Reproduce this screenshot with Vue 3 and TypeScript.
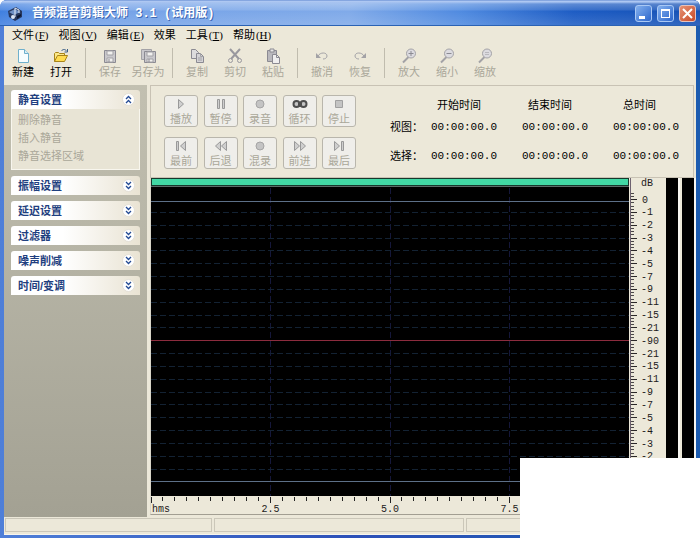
<script setup lang="ts">
interface Shape { d: string; fill?: string; stroke?: string; width?: number }
interface Item { label: string; icon: string; disabled?: boolean }

const GRAY = '#a3a2a6'
const DARK = '#8b8a92'

const icons: Record<string, Shape[]> = {
  file: [
    { d: 'M3.5 1.5h6l4 4v9h-10z', fill: '#f7fdff', stroke: '#6fb0cc' },
    { d: 'M9.5 1.5v4h4', fill: '#d8eef8', stroke: '#6fb0cc' },
  ],
  open: [
    { d: 'M1.5 13.5v-8l1-1h3l1 1h5v2', fill: '#fbe88a', stroke: '#a88418' },
    { d: 'M1.5 13.5l3-6h10l-3 6z', fill: '#ffdc50', stroke: '#a88418' },
    { d: 'M8.5 3c1-2 4-2 5 0M14.5 1v3h-3', stroke: '#3c5f86' },
  ],
  save: [
    { d: 'M2.5 2.5h11v12h-11z', fill: '#c9c8cc', stroke: DARK },
    { d: 'M5 3h6v4H5zM5 10h6v4H5z', fill: '#f1f0ee', stroke: GRAY },
    { d: 'M7 11v3', stroke: DARK },
  ],
  saveas: [
    { d: 'M1.5 1.5h10v10h-10z', fill: '#c9c8cc', stroke: GRAY },
    { d: 'M4.5 3.5h11v11h-11z', fill: '#c9c8cc', stroke: DARK },
    { d: 'M7 4h6v4H7zM7 11h6v3H7z', fill: '#f1f0ee', stroke: GRAY },
    { d: 'M9 11v3', stroke: DARK },
  ],
  copy: [
    { d: 'M2.5 1.5h4l3 3v6h-7z', fill: '#dddcdd', stroke: DARK },
    { d: 'M7.5 5.5h4l3 3v6h-7z', fill: '#d4d3d6', stroke: DARK },
    { d: 'M11.5 5.5v3h3M9 10h4M9 12h4', stroke: GRAY },
  ],
  cut: [
    { d: 'M3 1l9 10M13 1L4 11', stroke: '#99989e', width: 2 },
    { d: 'M1.5 12.5a2 2 0 1 0 4 0a2 2 0 1 0-4 0M10.5 12.5a2 2 0 1 0 4 0a2 2 0 1 0-4 0', stroke: '#99989e', width: 1 },
  ],
  paste: [
    { d: 'M2.5 2.5h9v11h-9z', fill: '#b9b8bd', stroke: DARK },
    { d: 'M5 1h4v3H5z', fill: '#e6e5e5', stroke: DARK },
    { d: 'M7.5 6.5h4l3 3v6h-7z', fill: '#efeeee', stroke: DARK },
    { d: 'M11.5 6.5v3h3', stroke: DARK },
  ],
  undo: [
    { d: 'M4 8c2-4 9-4 9 0c0 2-2 3-4 3', stroke: GRAY, width: 1 },
    { d: 'M2 5v5h5z', fill: GRAY },
  ],
  redo: [
    { d: 'M12 8c-2-4-9-4-9 0c0 2 2 3 4 3', stroke: GRAY, width: 1 },
    { d: 'M14 5v5H9z', fill: GRAY },
  ],
  zoomin: [
    { d: 'M7.5 9L2 14.5', stroke: GRAY, width: 2 },
    { d: 'M5.5 5.5a4.5 4.5 0 1 0 9 0a4.5 4.5 0 1 0-9 0', fill: '#dcdbe0', stroke: GRAY },
    { d: 'M7.5 5.5h5M10 3v5', stroke: DARK },
  ],
  zoomout: [
    { d: 'M7.5 9L2 14.5', stroke: GRAY, width: 2 },
    { d: 'M5.5 5.5a4.5 4.5 0 1 0 9 0a4.5 4.5 0 1 0-9 0', fill: '#dcdbe0', stroke: GRAY },
    { d: 'M7.5 5.5h5', stroke: DARK },
  ],
  zoom: [
    { d: 'M7.5 9L2 14.5', stroke: GRAY, width: 2 },
    { d: 'M5.5 5.5a4.5 4.5 0 1 0 9 0a4.5 4.5 0 1 0-9 0', fill: '#dcdbe0', stroke: GRAY },
    { d: 'M8 4.5h4M8 6.5h4', stroke: '#b9b8bd' },
  ],
  play: [{ d: 'M5.5 3.5l5 4.5l-5 4.5z', fill: '#cfcfcf', stroke: '#999' }],
  pause: [{ d: 'M4.5 3.5h2v9h-2zM9.5 3.5h2v9h-2z', fill: '#cfcfcf', stroke: '#999' }],
  record: [{ d: 'M4 8a4 4 0 1 0 8 0a4 4 0 1 0-8 0', fill: '#c4c4c4', stroke: '#a5a5a5' }],
  loop: [{ d: 'M1.5 8a3 3 0 1 0 6 0a3 3 0 1 0-6 0M8.5 8a3 3 0 1 0 6 0a3 3 0 1 0-6 0M6 8h4', fill: '#c4c4c4', stroke: '#4e4e4e', width: 2 }],
  stop: [{ d: 'M4.5 4.5h7v7h-7z', fill: '#c4c4c4', stroke: '#a0a0a0' }],
  first: [{ d: 'M3.5 3.5h2v9h-2zM12.5 3.5v9l-5-4.5z', fill: '#cfcfcf', stroke: '#999' }],
  rewind: [{ d: 'M7.5 3.5v9l-5-4.5zM13.5 3.5v9l-5-4.5z', fill: '#cfcfcf', stroke: '#999' }],
  forward: [{ d: 'M2.5 3.5v9l5-4.5zM8.5 3.5v9l5-4.5z', fill: '#cfcfcf', stroke: '#999' }],
  last: [{ d: 'M3.5 3.5v9l5-4.5zM10.5 3.5h2v9h-2z', fill: '#cfcfcf', stroke: '#999' }],
}

const menus = [
  { text: '文件', key: 'F' },
  { text: '视图', key: 'V' },
  { text: '编辑', key: 'E' },
  { text: '效果', key: '' },
  { text: '工具', key: 'T' },
  { text: '帮助', key: 'H' },
]

const toolGroups: Item[][] = [
  [{ label: '新建', icon: 'file' }, { label: '打开', icon: 'open' }],
  [{ label: '保存', icon: 'save', disabled: true }, { label: '另存为', icon: 'saveas', disabled: true }],
  [
    { label: '复制', icon: 'copy', disabled: true },
    { label: '剪切', icon: 'cut', disabled: true },
    { label: '粘贴', icon: 'paste', disabled: true },
  ],
  [{ label: '撤消', icon: 'undo', disabled: true }, { label: '恢复', icon: 'redo', disabled: true }],
  [
    { label: '放大', icon: 'zoomin', disabled: true },
    { label: '缩小', icon: 'zoomout', disabled: true },
    { label: '缩放', icon: 'zoom', disabled: true },
  ],
]

const transport: Item[] = [
  { label: '播放', icon: 'play' },
  { label: '暂停', icon: 'pause' },
  { label: '录音', icon: 'record' },
  { label: '循环', icon: 'loop' },
  { label: '停止', icon: 'stop' },
  { label: '最前', icon: 'first' },
  { label: '后退', icon: 'rewind' },
  { label: '混录', icon: 'record' },
  { label: '前进', icon: 'forward' },
  { label: '最后', icon: 'last' },
]

const panels = [
  { title: '静音设置', items: ['删除静音', '插入静音', '静音选择区域'] },
  { title: '振幅设置', items: [] },
  { title: '延迟设置', items: [] },
  { title: '过滤器', items: [] },
  { title: '噪声削减', items: [] },
  { title: '时间/变调', items: [] },
]

const zeroTime = '00:00:00.0'

// Decibel levels run outwards from the silent centre line in both directions.
const levels = ['0', '-1', '-2', '-3', '-4', '-5', '-7', '-9', '-11', '-15', '-21']
const TOP = 6.8
const BOTTOM = 95.6
const STEP = (BOTTOM - TOP) / 22
const marks = [...levels, '-90', ...[...levels].reverse()].map((text, i) => ({
  text,
  y: TOP + i * STEP,
}))
const gridLines = marks.slice(1, -1).filter((m) => m.text !== '-90')
const centerLine = TOP + 11 * STEP
const clipLines = [7.4, 95.4]
const minorLevels = Array.from({ length: 93 }, (_, i) => TOP + (i - 2) * (STEP / 4))
const pct = (n: number): string => `${n.toFixed(3)}%`

const seconds = [2.5, 5, 7.5]
const timeTicks = Array.from({ length: 41 }, (_, i) => i * 2.5)
</script>

<template>
  <div class="window">
    <header class="titlebar">
      <svg class="app-icon" width="16" height="16" viewBox="0 0 16 16" aria-hidden="true">
        <path d="M1 5l8-4l6 4v6l-7 4l-6-4z" fill="#26375e" />
        <path d="M2 6l6-3l5 3l-6 3z" fill="#6e8fc4" />
        <path d="M8 2v9M8 2l4 2v3" fill="none" stroke="#e5edfa" />
        <circle cx="6" cy="11" r="2" fill="#dce6f6" />
        <path d="M10 10l4-2v2l-4 3z" fill="#0c1630" />
      </svg>
      <h1>音频混音剪辑大师 3.1 (试用版)</h1>
      <div class="caption-buttons">
        <button type="button" aria-label="最小化"><svg width="15" height="15" viewBox="0 0 15 15"><path d="M3 10h6v3H3z" fill="#fff" /></svg></button>
        <button type="button" aria-label="最大化"><svg width="15" height="15" viewBox="0 0 15 15"><path d="M3 3h9v9H3zM4 5v6h7V5z" fill="#fff" fill-rule="evenodd" /></svg></button>
        <button type="button" class="close" aria-label="关闭"><svg width="15" height="15" viewBox="0 0 15 15"><path d="M3 3l9 9M12 3l-9 9" stroke="#fff" stroke-width="2" /></svg></button>
      </div>
    </header>

    <div class="client">
      <nav class="menubar">
        <button v-for="m in menus" :key="m.text" type="button">{{ m.text }}<span v-if="m.key" class="key">(<u>{{ m.key }}</u>)</span></button>
      </nav>

      <div class="toolbar">
        <div v-for="(group, gi) in toolGroups" :key="gi" class="group">
          <button v-for="t in group" :key="t.label" type="button" :disabled="t.disabled">
            <svg width="16" height="16" viewBox="0 0 16 16" aria-hidden="true">
              <path v-for="(s, i) in icons[t.icon]" :key="i" :d="s.d" :fill="s.fill ?? 'none'" :stroke="s.stroke ?? 'none'" :stroke-width="s.width ?? 1" />
            </svg>
            <span>{{ t.label }}</span>
          </button>
        </div>
      </div>

      <div class="body">
        <aside class="side">
          <section v-for="p in panels" :key="p.title" class="panel">
            <button type="button" class="panel-head" :aria-expanded="p.items.length > 0">
              <span>{{ p.title }}</span>
              <svg width="13" height="13" viewBox="0 0 13 13" aria-hidden="true">
                <circle cx="6.5" cy="6.5" r="6" fill="#fff" stroke="#e3dfd6" />
                <path v-if="p.items.length" d="M4 6l2.5-2.5L9 6M4 10l2.5-2.5L9 10" fill="none" stroke="#234a94" stroke-width="1.3" />
                <path v-else d="M4 3l2.5 2.5L9 3M4 7l2.5 2.5L9 7" fill="none" stroke="#234a94" stroke-width="1.3" />
              </svg>
            </button>
            <div v-if="p.items.length" class="panel-body">
              <button v-for="i in p.items" :key="i" type="button" disabled>{{ i }}</button>
            </div>
          </section>
        </aside>

        <main class="main">
          <div class="controls">
            <div class="transport">
              <button v-for="t in transport" :key="t.label" type="button" disabled>
                <svg width="16" height="16" viewBox="0 0 16 16" aria-hidden="true">
                  <path v-for="(s, i) in icons[t.icon]" :key="i" :d="s.d" :fill="s.fill ?? 'none'" :stroke="s.stroke ?? 'none'" :stroke-width="s.width ?? 1" />
                </svg>
                <span>{{ t.label }}</span>
              </button>
            </div>
            <table class="times">
              <colgroup><col class="c-label" /><col class="c-time" /><col class="c-time" /><col class="c-last" /></colgroup>
              <thead>
                <tr><td></td><th scope="col">开始时间</th><th scope="col">结束时间</th><th scope="col">总时间</th></tr>
              </thead>
              <tbody>
                <tr v-for="row in ['视图', '选择']" :key="row">
                  <th scope="row">{{ row }}：</th>
                  <td v-for="n in 3" :key="n">{{ zeroTime }}</td>
                </tr>
              </tbody>
            </table>
          </div>

          <div class="editor">
            <div class="wave">
              <div class="overview"></div>
              <svg class="plot" aria-hidden="true" shape-rendering="crispEdges">
                <line v-for="s in seconds" :key="s" :x1="pct(s * 10)" :x2="pct(s * 10)" y1="3%" y2="100%" stroke="#15173a" stroke-dasharray="6 3" />
                <line v-for="(m, i) in gridLines" :key="i" x1="0" x2="100%" :y1="pct(m.y)" :y2="pct(m.y)" stroke="#132233" stroke-dasharray="6 3" />
                <line v-for="y in clipLines" :key="y" x1="0" x2="100%" :y1="pct(y)" :y2="pct(y)" stroke="#5d7088" />
                <line x1="0" x2="100%" :y1="pct(centerLine)" :y2="pct(centerLine)" stroke="#8c2c3e" />
              </svg>
            </div>
            <svg class="scale" shape-rendering="crispEdges">
              <line x1="1" x2="1" y1="0" y2="100%" stroke="#6e6270" />
              <line v-for="(y, i) in minorLevels" :key="i" x1="2" x2="5" :y1="pct(y)" :y2="pct(y)" stroke="#4b4748" />
              <text x="12" y="8">dB</text>
              <template v-for="(m, i) in marks" :key="i">
                <line x1="2" x2="8" :y1="pct(m.y)" :y2="pct(m.y)" stroke="#2b2829" />
                <text :x="m.text === '0' ? 13 : 12" :y="pct(m.y)" dy="3">{{ m.text }}</text>
              </template>
            </svg>
            <div class="meters"><i></i><i></i></div>
            <svg class="ruler" shape-rendering="crispEdges">
              <line v-for="(x, i) in timeTicks" :key="i" :x1="pct(x)" :x2="pct(x)" y1="1" :y2="i % 10 ? 5 : 7" stroke="#222" />
              <text x="1" y="16">hms</text>
              <text v-for="s in seconds" :key="s" :x="pct(s * 10)" y="16" text-anchor="middle">{{ s.toFixed(1) }}</text>
            </svg>
          </div>
        </main>
      </div>

      <footer class="status"><span></span><span></span><span></span></footer>
    </div>
    <div class="blank"></div>
  </div>
</template>

<style>
body {
  margin: 0;
  background: #fff;
}
</style>

<style scoped>
.window {
  position: relative;
  display: flex;
  flex-direction: column;
  box-sizing: border-box;
  height: 100vh;
  min-height: 420px;
  padding: 0 4px 3px;
  overflow: hidden;
  border-radius: 7px 7px 0 0;
  background: linear-gradient(90deg, #4f7fd8, #2c50b8 50%, #1c5cb0);
  font-family: "Liberation Sans", "Noto Sans CJK SC", sans-serif;
  font-size: 11px;
  line-height: 14px;
  color: #000;
}
button {
  margin: 0;
  padding: 0;
  border: 0;
  background: none;
  font: inherit;
  color: inherit;
}
svg {
  display: block;
}
.titlebar {
  display: flex;
  flex: none;
  align-items: center;
  gap: 9px;
  height: 26px;
  margin: 0 -4px;
  padding: 2px 4px 0 7px;
  box-sizing: border-box;
  border-bottom: 1px solid #2a62b4;
  background:
    linear-gradient(180deg, #5680cc 0, #b4ccf4 1px, #a8c3f0 2px, rgba(255, 255, 255, 0.28) 4px, rgba(255, 255, 255, 0.12) 10px, rgba(255, 255, 255, 0) 11px, rgba(255, 255, 255, 0.12) 25px),
    linear-gradient(90deg, #3f7fe0 0, #74a2e8 12%, #80aae9 50%, #4f8ae0 66%, #1d5cc4 82%, #1450b4 100%);
}
h1 {
  flex: 1;
  margin: 0;
  font-family: "Liberation Mono", "Noto Sans CJK SC", monospace;
  font-size: 12px;
  line-height: 16px;
  font-weight: 700;
  color: #fff;
  white-space: nowrap;
  text-shadow: 1px 1px 0 #3d68b4;
}
.caption-buttons {
  display: flex;
  gap: 5px;
}
.caption-buttons button {
  width: 17px;
  height: 17px;
  border: 1px solid #a9c8f4;
  border-radius: 3px;
  background: linear-gradient(135deg, #83b0ee, #2c66cc);
}
.caption-buttons .close {
  border-color: #e6c3bd;
  background: linear-gradient(135deg, #e59275, #c94a28);
}
.client {
  display: flex;
  flex: 1;
  flex-direction: column;
  min-height: 0;
  background: #ece8d9;
}
.menubar {
  display: flex;
  flex: none;
  gap: 10px;
  height: 17px;
  padding-left: 8px;
}
.menubar button {
  white-space: nowrap;
}
.key {
  padding-left: 1px;
  font-family: "Liberation Serif", serif;
}
.toolbar {
  display: flex;
  flex: none;
  height: 42px;
}
.group {
  display: flex;
}
.group + .group::before {
  content: "";
  width: 1px;
  height: 30px;
  margin: 5px 5px 0;
  background: #c0bcae;
}
.group button {
  display: flex;
  flex-direction: column;
  align-items: center;
  gap: 1px;
  width: 38px;
  padding-top: 5px;
  white-space: nowrap;
}
.group button:disabled {
  color: #aaa799;
}
.body {
  display: flex;
  flex: 1;
  min-height: 0;
}
.side {
  display: flex;
  flex: none;
  flex-direction: column;
  gap: 6px;
  box-sizing: border-box;
  width: 143px;
  padding: 5px 7px;
  background: linear-gradient(180deg, #c2c0b1, #a3a193);
}
.panel-head {
  display: flex;
  align-items: center;
  justify-content: space-between;
  box-sizing: border-box;
  width: 100%;
  height: 19px;
  padding: 0 5px 0 7px;
  border-radius: 3px 3px 0 0;
  background: linear-gradient(90deg, #fff 40%, #e9e3d3);
  font-weight: 700;
  color: #1f3f80;
}
.panel-body {
  display: flex;
  flex-direction: column;
  align-items: flex-start;
  gap: 4px;
  padding: 4px 6px 6px;
  border: solid #f8f6ee;
  border-width: 0 1px 1px;
  background: #e8e4d5;
}
.panel-body button {
  color: #aaa799;
}
.main {
  display: flex;
  flex: 1;
  flex-direction: column;
  min-width: 0;
  padding: 0 0 2px 3px;
}
.controls {
  display: flex;
  flex: none;
  align-items: flex-start;
  gap: 34px;
  height: 93px;
  margin-right: 2px;
  box-sizing: border-box;
  padding: 9px 0 0 13px;
  border: 1px solid #c8c2b4;
}
.transport {
  display: grid;
  flex: none;
  grid-template-columns: repeat(5, 34px);
  justify-content: space-between;
  gap: 10px 0;
  width: 192px;
}
.transport button {
  display: flex;
  flex-direction: column;
  align-items: center;
  box-sizing: border-box;
  height: 32px;
  border: 1px solid #b9b6ac;
  border-radius: 3px;
  background: #efeeea;
  color: #aaa799;
}
.times {
  flex: none;
  width: 290px;
  margin-top: 2px;
  border-collapse: collapse;
  table-layout: fixed;
  white-space: nowrap;
}
.c-label {
  width: 41px;
}
.c-time {
  width: 91px;
}
.c-last {
  width: 67px;
}
.times th,
.times td {
  padding: 0;
  font-weight: 400;
  text-align: left;
}
.times thead {
  height: 15px;
}
.times thead th {
  padding-left: 6px;
}
.times thead th:last-child {
  padding-left: 10px;
}
.times tbody tr {
  height: 29px;
}
.times tbody td {
  font-family: "Liberation Mono", monospace;
}
.editor {
  display: grid;
  flex: 1;
  grid-template: minmax(0, 1fr) 18px / minmax(0, 1fr) 37px 30px;
  border-left: 1px solid #d9d5c8;
  border-bottom: 1px solid #a29e92;
}
.wave {
  display: grid;
  background: #000;
}
.overview,
.plot {
  grid-area: 1 / 1;
}
.overview {
  box-sizing: border-box;
  height: 8px;
  border: 1px solid #16382c;
  background: #42d8a4;
  box-shadow: 0 1px 0 #5c6b68;
}
.plot {
  width: 100%;
  height: 100%;
}
.scale {
  width: 37px;
  height: 100%;
}
.scale text,
.ruler text {
  font-family: "Liberation Mono", monospace;
  font-size: 10px;
  fill: #1c1a1a;
}
.meters {
  display: flex;
  gap: 2px;
}
.meters i {
  flex: 1;
  border-right: 2px solid #f8f7f2;
  background: #000;
}
.ruler {
  width: 100%;
  height: 18px;
}
.status {
  display: grid;
  flex: none;
  grid-template-columns: 207px 250px 1fr;
  gap: 2px;
  height: 18px;
  box-sizing: border-box;
  padding: 1px 1px 2px;
  border-bottom: 1px solid #f6f5ef;
}
.status span {
  border: 1px solid #cbc7b9;
}
.blank {
  position: absolute;
  right: 0;
  bottom: 0;
  width: 180px;
  height: 80px;
  background: #fff;
}
</style>
